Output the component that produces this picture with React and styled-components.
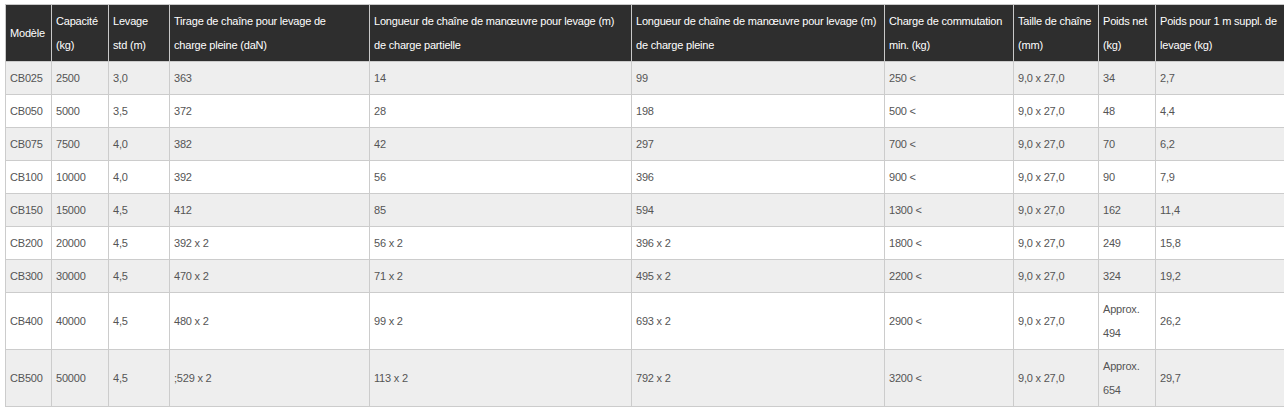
import React from 'react';
import styled, { createGlobalStyle } from 'styled-components';

const GlobalStyle = createGlobalStyle`
  html, body {
    margin: 0;
    padding: 0;
    background: #ffffff;
    overflow: hidden;
  }
`;

const Page = styled.div`
  padding: 4px 0 0 5px;
  font-family: "Liberation Sans", Arial, Helvetica, sans-serif;
`;

const Table = styled.table`
  border-collapse: collapse;
  table-layout: fixed;
  width: 1279px;
  font-size: 11px;
  line-height: 24px;

  th:last-child,
  td:last-child {
    border-right: none;
  }
`;

const HeadCell = styled.th`
  background: #2e2e2e;
  color: #ffffff;
  font-weight: normal;
  text-align: left;
  vertical-align: middle;
  padding: 4px 4px;
  border: 1px solid #c9c9c9;
  border-bottom: none;
  letter-spacing: -0.2px;
`;

const Row = styled.tr`
  background: ${p => (p.$shade ? '#eeeeee' : '#ffffff')};
`;

const Cell = styled.td`
  color: #555555;
  padding: 4px 4px;
  border: 1px solid #cccccc;
  vertical-align: middle;
  letter-spacing: -0.2px;
`;

const cols = [46, 57, 61, 200, 262, 253, 129, 85, 57, 129];

const headers = [
  ['Modèle'],
  ['Capacité', '(kg)'],
  ['Levage', 'std (m)'],
  ['Tirage de chaîne pour levage de', 'charge pleine (daN)'],
  ['Longueur de chaîne de manœuvre pour levage (m)', 'de charge partielle'],
  ['Longueur de chaîne de manœuvre pour levage (m)', 'de charge pleine'],
  ['Charge de commutation', 'min. (kg)'],
  ['Taille de chaîne', '(mm)'],
  ['Poids net', '(kg)'],
  ['Poids pour 1 m suppl. de', 'levage (kg)'],
];

const rows = [
  ['CB025', '2500', '3,0', '363', '14', '99', '250 <', '9,0 x 27,0', '34', '2,7'],
  ['CB050', '5000', '3,5', '372', '28', '198', '500 <', '9,0 x 27,0', '48', '4,4'],
  ['CB075', '7500', '4,0', '382', '42', '297', '700 <', '9,0 x 27,0', '70', '6,2'],
  ['CB100', '10000', '4,0', '392', '56', '396', '900 <', '9,0 x 27,0', '90', '7,9'],
  ['CB150', '15000', '4,5', '412', '85', '594', '1300 <', '9,0 x 27,0', '162', '11,4'],
  ['CB200', '20000', '4,5', '392 x 2', '56 x 2', '396 x 2', '1800 <', '9,0 x 27,0', '249', '15,8'],
  ['CB300', '30000', '4,5', '470 x 2', '71 x 2', '495 x 2', '2200 <', '9,0 x 27,0', '324', '19,2'],
  ['CB400', '40000', '4,5', '480 x 2', '99 x 2', '693 x 2', '2900 <', '9,0 x 27,0', ['Approx.', '494'], '26,2'],
  ['CB500', '50000', '4,5', ';529 x 2', '113 x 2', '792 x 2', '3200 <', '9,0 x 27,0', ['Approx.', '654'], '29,7'],
];

const renderLines = lines =>
  lines.map((l, i) => (
    <React.Fragment key={i}>
      {i > 0 && <br />}
      {l}
    </React.Fragment>
  ));

export default function App() {
  return (
    <Page>
      <GlobalStyle />
      <Table>
        <colgroup>
          {cols.map((w, i) => (
            <col key={i} style={{ width: w }} />
          ))}
        </colgroup>
        <thead>
          <tr>
            {headers.map((h, i) => (
              <HeadCell key={i}>{renderLines(h)}</HeadCell>
            ))}
          </tr>
        </thead>
        <tbody>
          {rows.map((r, i) => (
            <Row key={r[0]} $shade={i % 2 === 0}>
              {r.map((c, j) => (
                <Cell key={j}>{Array.isArray(c) ? renderLines(c) : c}</Cell>
              ))}
            </Row>
          ))}
        </tbody>
      </Table>
    </Page>
  );
}
